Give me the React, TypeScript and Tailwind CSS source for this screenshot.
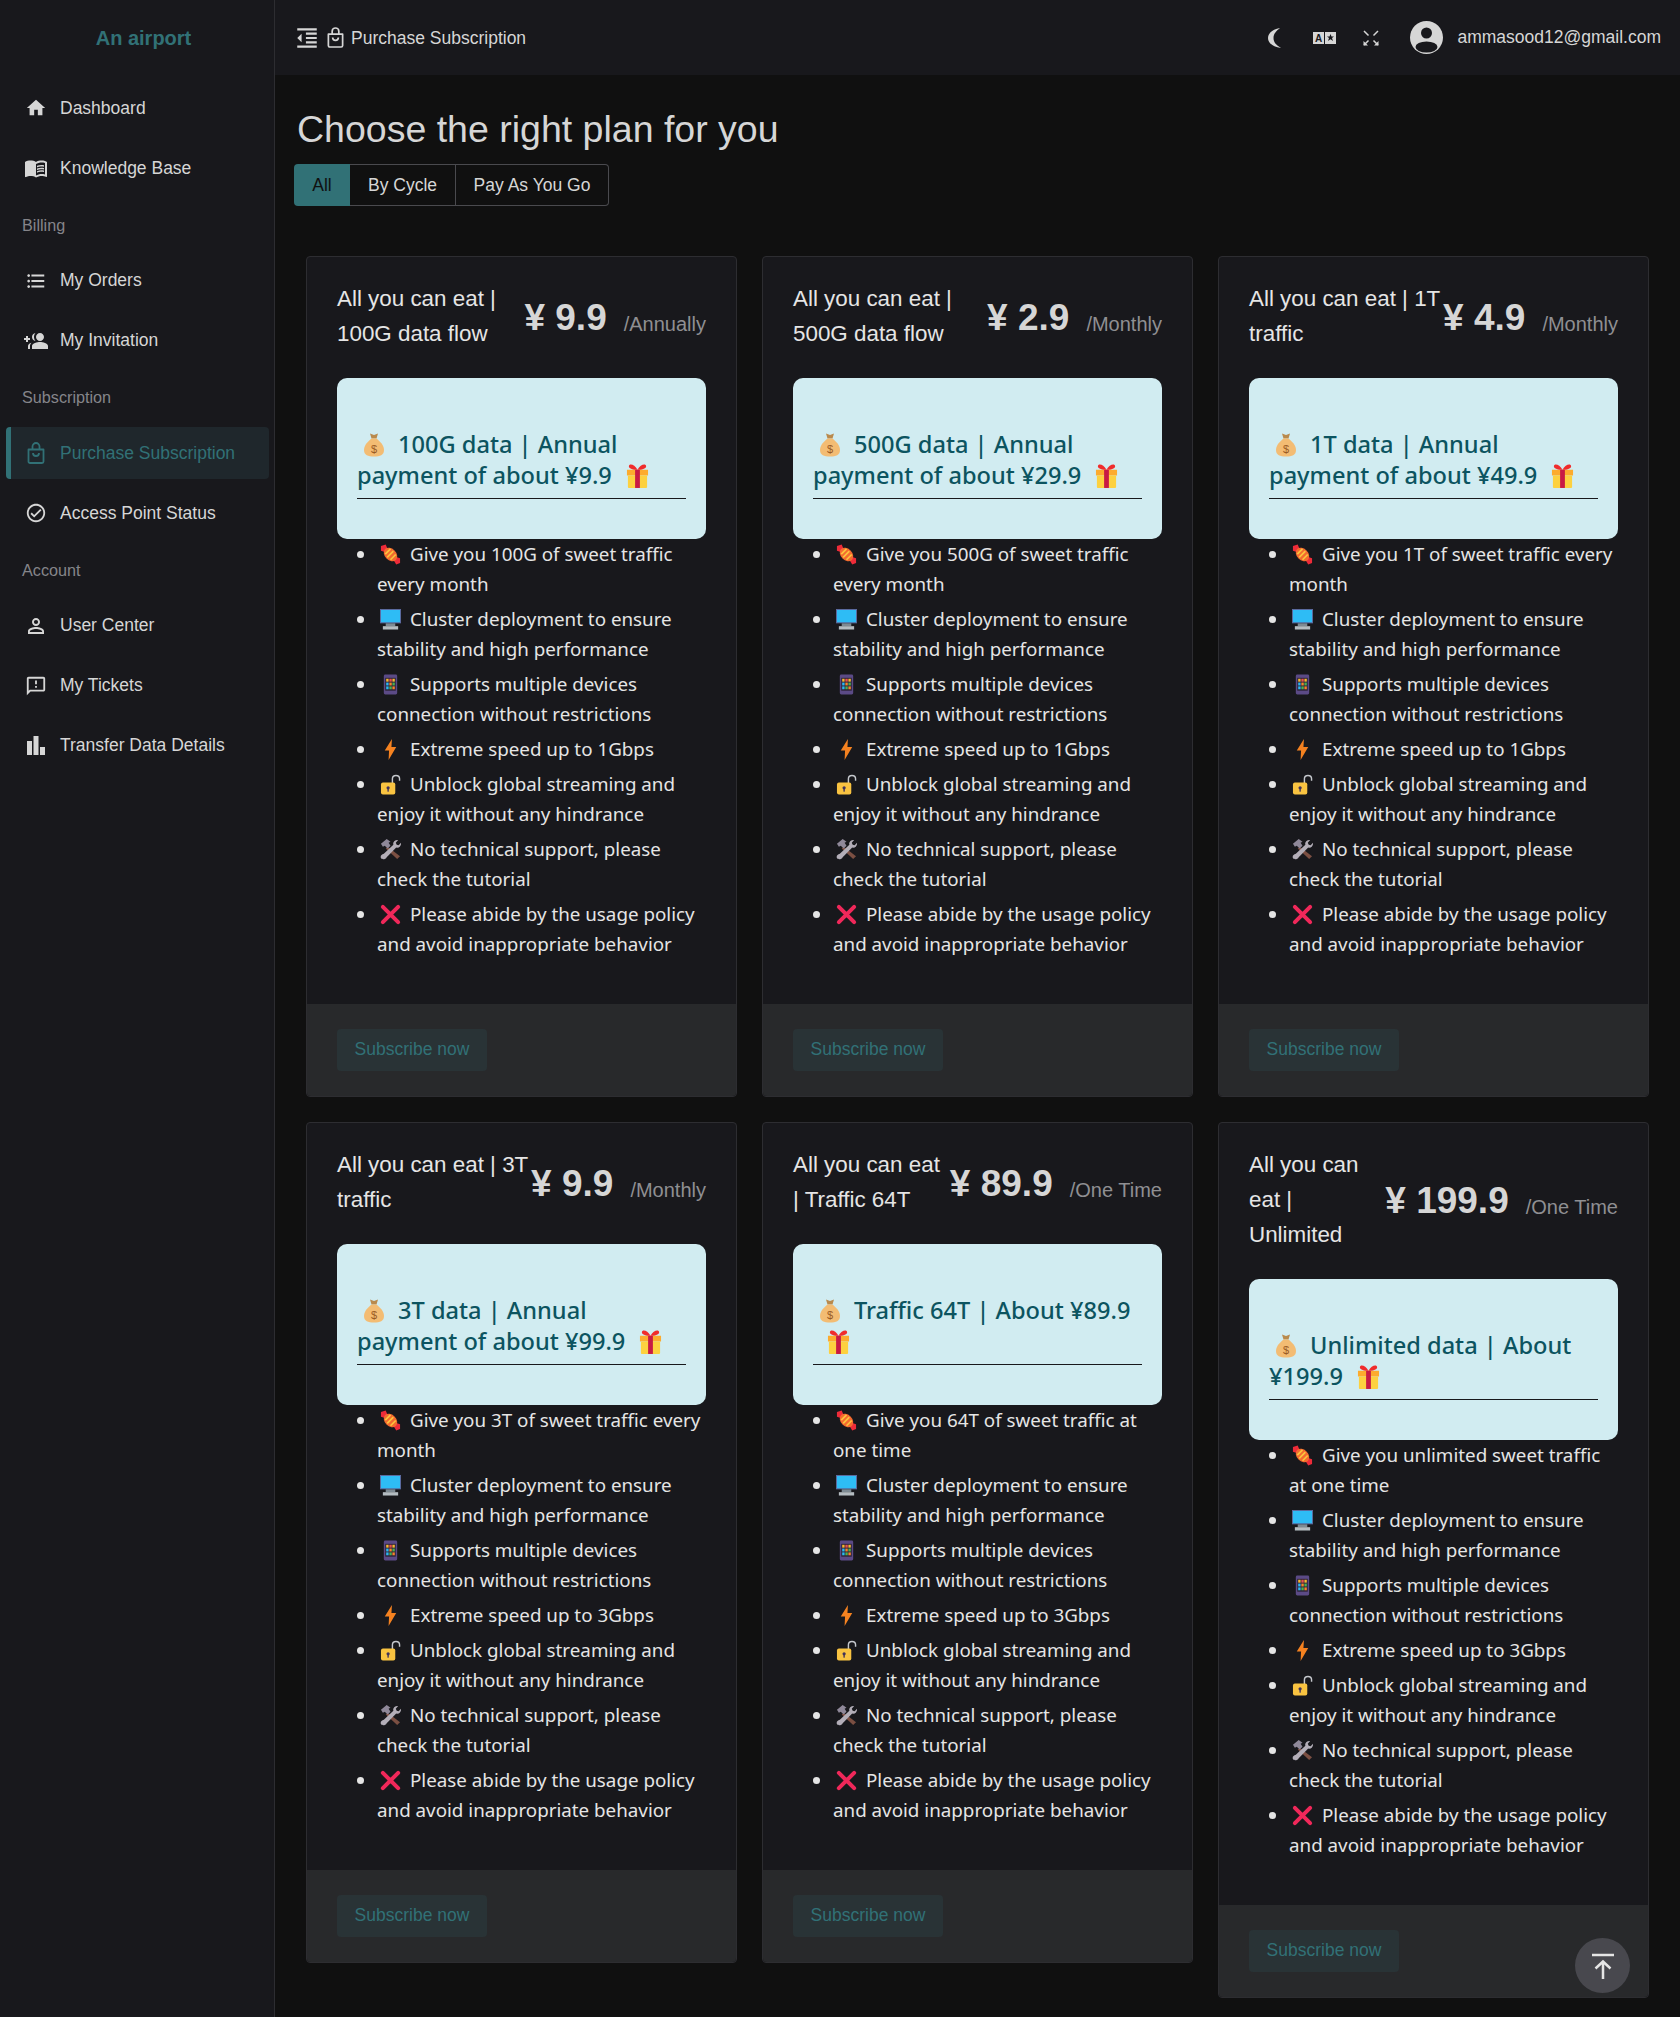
import React from 'react';
import {
  MdFormatIndentDecrease,
  MdFormatListBulleted,
  MdGroupAdd,
  MdHome,
  MdMenuBook,
  MdOutlineCheckCircle,
  MdOutlineFeedback,
  MdOutlinePersonOutline,
} from 'react-icons/md';

const sans = "font-['Liberation_Sans',Arial,sans-serif]";
const body = "font-['Noto_Sans','Open_Sans',sans-serif]";

const BagEmoji = () => (
  <svg viewBox="0 0 22 24" className="inline-block w-[22px] h-6 align-[-4px] ml-[6px] mr-[13px]">
    <path d="M7 0.500l4 1.500 4-1.500-1.500 5h-5z" fill="#b98a4d" />
    <path d="M8.500 5.500h5c3 2.500 7.500 6.500 7.500 11.500 0 5-4 6.500-10 6.500S1 22 1 17C1 12 5.500 8 8.500 5.500z" fill="#f3bc73" />
    <text x="11" y="19.500" fontSize="11" textAnchor="middle" fill="#9a5a25" fontFamily="Liberation Sans">$</text>
  </svg>
);

const GiftEmoji = () => (
  <svg viewBox="0 0 24 26" className="inline-block w-[23px] h-[25px] align-[-4px] ml-[14px]">
    <rect x="1" y="7" width="22" height="6" fill="#fdab2e" />
    <rect x="2" y="13" width="20" height="13" rx="1" fill="#fdd13f" />
    <rect x="9.500" y="7" width="5" height="19" fill="#c81a45" />
    <path d="M12 7C9 1 3 0 3 3.500 3 6 8 7 12 7zm0 0c3-6 9-7 9-3.500C21 6 16 7 12 7z" fill="#f02c2c" />
  </svg>
);

const CandyEmoji = () => (
  <svg viewBox="0 0 22 22" className="inline-block w-[21px] h-[21px] align-[-4px] ml-[3px]">
    <path d="M1 7l0-5 5-1.500 2 5-3 3z" fill="#ee2b39" />
    <path d="M21 15v5l-4 1.500-3-5 3-3z" fill="#ee2b39" />
    <ellipse cx="11" cy="11" rx="8" ry="6" transform="rotate(45 11 11)" fill="#f46a2f" />
    <path d="M11 5L5.500 10.500M14 7.500L7.500 14M16.500 11L11 16.500" stroke="#fcc43d" strokeWidth="1.800" />
  </svg>
);

const ComputerEmoji = () => (
  <svg viewBox="0 0 22 22" className="inline-block w-[21px] h-[21px] align-[-4px] ml-[3px]">
    <rect x="0.500" y="0.500" width="21" height="14" fill="#2ebcf5" stroke="#5e6aa0" />
    <rect x="6" y="15" width="10" height="3" fill="#7d8a93" />
    <rect x="3" y="18" width="16" height="3.500" fill="#b4bcc1" />
  </svg>
);

const PhoneEmoji = () => (
  <svg viewBox="0 0 22 22" className="inline-block w-[21px] h-[21px] align-[-4px] ml-[3px]">
    <rect x="4" y="0.500" width="14" height="21" rx="1.500" fill="#5b4a86" />
    <rect x="5.500" y="4" width="11" height="13.500" fill="#2d2438" />
    <rect x="6.500" y="5" width="2.500" height="3" fill="#f7b731" />
    <rect x="9.800" y="5" width="2.500" height="3" fill="#e94f4f" />
    <rect x="13" y="5" width="2.500" height="3" fill="#f7b731" />
    <rect x="6.500" y="9" width="2.500" height="3" fill="#2bb8f2" />
    <rect x="9.800" y="9" width="2.500" height="3" fill="#f7842b" />
    <rect x="13" y="9" width="2.500" height="3" fill="#4caf50" />
    <rect x="6.500" y="13" width="2.500" height="3" fill="#2bb8f2" />
    <rect x="9.800" y="13" width="2.500" height="3" fill="#4caf50" />
    <rect x="13" y="13" width="2.500" height="3" fill="#f7842b" />
  </svg>
);

const BoltEmoji = () => (
  <svg viewBox="0 0 22 22" className="inline-block w-[21px] h-[21px] align-[-4px] ml-[3px]">
    <path d="M12.500 0L5 12h4.500L9 22l8-13.500h-5z" fill="#f58220" />
  </svg>
);

const LockEmoji = () => (
  <svg viewBox="0 0 22 22" className="inline-block w-[21px] h-[21px] align-[-4px] ml-[3px]">
    <path d="M13 10V5c0-4.500 7.500-4.500 7.500 0v2" fill="none" stroke="#c4c7cc" strokeWidth="1.500" />
    <rect x="1" y="9" width="15" height="12.500" rx="2" fill="#f9c341" />
    <circle cx="8.500" cy="14.500" r="1.700" fill="#40325a" />
    <rect x="7.800" y="15" width="1.400" height="3.500" fill="#40325a" />
  </svg>
);

const ToolsEmoji = () => (
  <svg viewBox="0 0 22 22" className="inline-block w-[21px] h-[21px] align-[-4px] ml-[3px]">
    <path d="M8 8l13 10-3 3L6 10z" fill="#7b4f42" />
    <path d="M1 5l6-5 4 3-2 1 2 3-3 3-3-3-2 1z" fill="#8f8899" />
    <path d="M19 1l-2.500 3 1 2 2 .5L22 4c.5 3-2 6-5 5L7 19c-1 2.500-5 3-6 1-1-2 .5-4 3-4.500l10-9.500C13 3 16 .5 19 1z" fill="#b3aeb8" />
  </svg>
);

const CrossEmoji = () => (
  <svg viewBox="0 0 22 22" className="inline-block w-[21px] h-[21px] align-[-4px] ml-[3px]">
    <path d="M3 3l16 16M19 3L3 19" stroke="#f0285a" strokeWidth="4.200" strokeLinecap="round" />
  </svg>
);

const BagIcon: React.FC<{ className?: string }> = ({ className }) => (
  <svg viewBox="0 0 20 22" fill="none" stroke="currentColor" strokeWidth="1.800" className={className}>
    <path d="M2.500 7.500h15v12a1.500 1.500 0 0 1-1.500 1.500H4a1.500 1.500 0 0 1-1.500-1.500z" strokeLinejoin="round" />
    <path d="M6.500 7.500V4.500a3.500 3.500 0 0 1 7 0v3" />
    <path d="M7 11a3 3 0 0 0 6 0" />
  </svg>
);

const BarsIcon = () => (
  <svg viewBox="0 0 18 19" className="w-[18px] h-[19px]" fill="#d6d6d6">
    <rect x="0" y="5" width="5" height="14" />
    <rect x="6.500" y="0" width="5" height="19" />
    <rect x="13" y="11" width="5" height="8" />
  </svg>
);

const Crescent = () => (
  <svg viewBox="0 0 14 20" className="w-[14px] h-5" fill="#d6d6d6">
    <path d="M12 0C5 1 0 5 0 10s5 9 13 10C8 17 5.500 14 5.500 10S8 3 12 0z" />
  </svg>
);

const Translate = () => (
  <svg viewBox="0 0 23 14" className="w-[23px] h-[14px]">
    <rect x="0" y="1" width="11" height="12" fill="#d6d6d6" />
    <rect x="12" y="1" width="11" height="12" fill="#d6d6d6" />
    <text x="5.500" y="11" fontSize="10" fontWeight="700" textAnchor="middle" fill="#18181c" fontFamily="Liberation Sans">A</text>
    <path d="M17.500 3l1 2.500h2.500l-2 1.500 1 3-2.500-1.800L15 10l1-3-2-1.500h2.500z" fill="#18181c" />
  </svg>
);

const ExpandIcon = () => (
  <svg viewBox="0 0 16 16" className="w-4 h-4" fill="#d6d6d6" stroke="#d6d6d6" strokeWidth="1.500">
    <path d="M1 1l4.500 4.500M15 1l-4.500 4.500" />
    <path d="M1 15l4.500-4.500M15 15l-4.500-4.500" />
    <path d="M0.500 11v4.500H5zM15.500 11v4.500H11z" strokeWidth="0" />
  </svg>
);

const Avatar = () => (
  <svg viewBox="0 0 33 33" className="w-[33px] h-[33px]">
    <circle cx="16.500" cy="16.500" r="16.500" fill="#d6d6d6" />
    <circle cx="16.500" cy="12" r="5.500" fill="#18181c" />
    <ellipse cx="16.500" cy="26" rx="11" ry="5.500" fill="#18181c" />
  </svg>
);

const navTop = [
  { name: 'Dashboard', icon: <MdHome size={22} /> },
  { name: 'Knowledge Base', icon: <MdMenuBook size={24} /> },
];

const navGroups = [
  {
    title: 'Billing',
    items: [
      { name: 'My Orders', icon: <MdFormatListBulleted size={22} /> },
      { name: 'My Invitation', icon: <MdGroupAdd size={24} className="-scale-x-100" /> },
    ],
  },
  {
    title: 'Subscription',
    items: [
      { name: 'Purchase Subscription', active: true, icon: <BagIcon className="w-5 h-[22px]" /> },
      { name: 'Access Point Status', icon: <MdOutlineCheckCircle size={22} /> },
    ],
  },
  {
    title: 'Account',
    items: [
      { name: 'User Center', icon: <MdOutlinePersonOutline size={24} /> },
      { name: 'My Tickets', icon: <MdOutlineFeedback size={22} /> },
      { name: 'Transfer Data Details', icon: <BarsIcon /> },
    ],
  },
];

const plans = [
  {
    name: 'All you can eat | 100G data flow', price: '9.9', cycle: '/Annually',
    banner: '100G data | Annual payment of about ¥9.9',
    traffic: 'Give you 100G of sweet traffic every month', speed: '1Gbps',
  },
  {
    name: 'All you can eat | 500G data flow', price: '2.9', cycle: '/Monthly',
    banner: '500G data | Annual payment of about ¥29.9',
    traffic: 'Give you 500G of sweet traffic every month', speed: '1Gbps',
  },
  {
    name: 'All you can eat | 1T traffic', price: '4.9', cycle: '/Monthly',
    banner: '1T data | Annual payment of about ¥49.9',
    traffic: 'Give you 1T of sweet traffic every month', speed: '1Gbps',
  },
  {
    name: 'All you can eat | 3T traffic', price: '9.9', cycle: '/Monthly',
    banner: '3T data | Annual payment of about ¥99.9',
    traffic: 'Give you 3T of sweet traffic every month', speed: '3Gbps',
  },
  {
    name: 'All you can eat | Traffic 64T', price: '89.9', cycle: '/One Time',
    banner: 'Traffic 64T | About ¥89.9',
    traffic: 'Give you 64T of sweet traffic at one time', speed: '3Gbps',
  },
  {
    name: 'All you can eat | Unlimited', price: '199.9', cycle: '/One Time',
    banner: 'Unlimited data | About ¥199.9',
    traffic: 'Give you unlimited sweet traffic at one time', speed: '3Gbps',
  },
];

const NavItem: React.FC<{ name: string; icon: React.ReactNode; active?: boolean }> = ({ name, icon, active }) => (
  <div
    className={`h-[52px] mb-2 ml-[6px] mr-[5px] rounded flex items-center border-l-[5px] ${
      active ? 'bg-[#1f272c] border-[#317176] text-[#317176]' : 'border-transparent text-[#d6d6d6]'
    }`}
  >
    <span className="w-[24px] ml-[13px] flex justify-center">{icon}</span>
    <span className="ml-[12px] text-[17.500px]">{name}</span>
  </div>
);

const PlanCard: React.FC<{ plan: (typeof plans)[number] }> = ({ plan }) => {
  const features: [React.ReactNode, string][] = [
    [<CandyEmoji />, plan.traffic],
    [<ComputerEmoji />, 'Cluster deployment to ensure stability and high performance'],
    [<PhoneEmoji />, 'Supports multiple devices connection without restrictions'],
    [<BoltEmoji />, `Extreme speed up to ${plan.speed}`],
    [<LockEmoji />, 'Unblock global streaming and enjoy it without any hindrance'],
    [<ToolsEmoji />, 'No technical support, please check the tutorial'],
    [<CrossEmoji />, 'Please abide by the usage policy and avoid inappropriate behavior'],
  ];

  return (
    <div className="bg-[#18181c] border border-[#2d2d31] rounded flex flex-col w-full">
      <div className="px-[30px] pt-[24px] flex items-center justify-between">
        <div className="text-[22.400px] leading-[35px] text-[#e5e5e5] min-w-0 flex-1">{plan.name}</div>
        <div className="flex items-baseline shrink-0 mt-[3px]">
          <span className="text-[37px] leading-[50px] font-bold text-[#d6d6d6]">¥ {plan.price}</span>
          <span className="ml-[17px] text-[20px] text-[#8f8f92] translate-y-[1px]">{plan.cycle}</span>
        </div>
      </div>
      <div className="mx-[30px] mt-[27px] h-[161px] rounded-[10px] bg-[#d1ecf1] px-5 pt-[51px] text-[#0c5460]">
        <div className={`${body} text-[23.600px] leading-[31px] font-medium border-b border-[#18181c] pb-[7px]`}>
          <BagEmoji />
          {plan.banner}
          <GiftEmoji />
        </div>
      </div>
      <ul className={`${body} list-disc ml-[70px] mr-[30px] pb-[40px] text-[#e5e5e5] text-[18.800px] leading-[30px]`}>
        {features.map(([icon, text], i) => (
          <li key={i} className="pb-[5px]">
            {icon}
            <span className="ml-[9px]">{text}</span>
          </li>
        ))}
      </ul>
      <div className="mt-auto bg-[#28292b] h-[92px] px-[30px] pt-[25px] rounded-b">
        <button className="w-[150px] h-[42px] pb-[2px] rounded bg-[#293336] text-[#317176] text-[17.500px]">Subscribe now</button>
      </div>
    </div>
  );
};

export default function App() {
  return (
    <div className={`${sans} flex min-h-[2017px] bg-[#101010] text-[#d6d6d6]`}>
      <aside className="w-[275px] shrink-0 bg-[#18181c] border-r border-[#2d2d31]">
        <div className="h-[75px] pl-[13px] flex items-center justify-center text-[20px] font-bold text-[#317176]">An airport</div>
        <div className="pt-[7px]">
          {navTop.map((item) => (
            <NavItem key={item.name} {...item} />
          ))}
          {navGroups.map((group) => (
            <div key={group.title}>
              <div className="h-[46px] mb-[6.500px] pl-[22px] flex items-center text-[16.200px] text-[#85858a]">{group.title}</div>
              {group.items.map((item) => (
                <NavItem key={item.name} {...item} />
              ))}
            </div>
          ))}
        </div>
      </aside>
      <div className="flex-1 min-w-0">
        <header className="h-[75px] bg-[#18181c] flex items-center pl-[19px] pr-[19px]">
          <MdFormatIndentDecrease size={26} />
          <BagIcon className="ml-[6px] w-[19px] h-[21px]" />
          <span className="ml-[6px] mt-[2px] text-[17.500px]">Purchase Subscription</span>
          <div className="ml-auto flex items-center">
            <Crescent />
            <span className="ml-[31px]"><Translate /></span>
            <span className="ml-[27px]"><ExpandIcon /></span>
            <span className="ml-[31px]"><Avatar /></span>
            <span className="ml-[14px] text-[17.500px]">ammasood12@gmail.com</span>
          </div>
        </header>
        <main className="pl-[19px] pr-[31px]">
          <h1 className="pl-[3px] pt-[31px] text-[37.500px] leading-[46px] text-[#d6d6d6]">Choose the right plan for you</h1>
          <div className="mt-[12px] flex h-[42px] w-fit text-[17.500px]">
            <div className="w-[56px] bg-[#317176] text-[#101010] rounded-l flex items-center justify-center">All</div>
            <div className="w-[106px] border-y border-r border-[#4a4a4e] flex items-center justify-center">By Cycle</div>
            <div className="w-[153px] border-y border-r border-[#4a4a4e] rounded-r flex items-center justify-center">Pay As You Go</div>
          </div>
          <div className="mt-[50px] ml-[12px] grid grid-cols-3 gap-[25px] items-start">
            {plans.map((plan) => (
              <PlanCard key={plan.name} plan={plan} />
            ))}
          </div>
        </main>
      </div>
      <button className="fixed right-[50px] bottom-[24px] w-[55px] h-[55px] rounded-full bg-[#48484e] flex items-center justify-center">
        <svg viewBox="0 0 24 26" className="w-[24px] h-[26px]" fill="none" stroke="#e5e5e5" strokeWidth="2.500">
          <path d="M1 2h22" />
          <path d="M12 26V9M4.500 15.500L12 8.500l7.500 7" />
        </svg>
      </button>
    </div>
  );
}
